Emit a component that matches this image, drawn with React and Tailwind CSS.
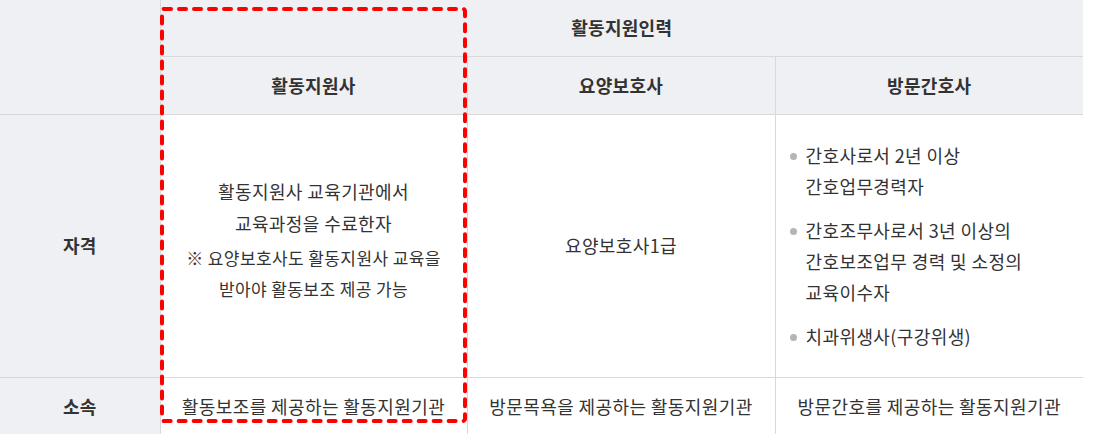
import React from "react"

const font = { fontFamily: '"Noto Sans CJK KR", "Noto Sans", sans-serif' }

function Bullet({ lines }) {
  return (
    <li className="flex gap-[9px]">
      <span className="mt-[13px] h-[7px] w-[7px] shrink-0 rounded-full bg-[#b5b5b5]" />
      <span>
        {lines.map((l, i) => (
          <span key={i} className="block">{l}</span>
        ))}
      </span>
    </li>
  )
}

export default function App() {
  const head = "bg-[#eff0f4] text-[18px] font-bold text-[#333] text-center tracking-[0.3px]"
  const line = "border-[#d9d9dc]"
  return (
    <div className="relative h-[434px] w-[1096px] overflow-hidden bg-white" style={font}>
      <table className="table-fixed border-collapse text-[#333]" style={{ width: 1083 }}>
        <colgroup>
          <col className="w-[160px]" />
          <col className="w-[307px]" />
          <col className="w-[308px]" />
          <col className="w-[308px]" />
        </colgroup>
        <thead>
          <tr className="h-[56px]">
            <th rowSpan={2} className={`${head} border-r border-b ${line}`}></th>
            <th colSpan={3} className={`${head} border-b ${line}`}>활동지원인력</th>
          </tr>
          <tr className="h-[58px]">
            <th className={`${head} border-r border-b ${line}`}>활동지원사</th>
            <th className={`${head} border-r border-b ${line}`}>요양보호사</th>
            <th className={`${head} border-b ${line}`}>방문간호사</th>
          </tr>
        </thead>
        <tbody className="text-[18px] tracking-[0.4px]">
          <tr className="h-[263px]">
            <th className={`${head} border-r border-b ${line}`}>자격</th>
            <td className={`border-r border-b ${line} pb-[12px] text-center align-middle`}>
              <p className="leading-[32px]">활동지원사 교육기관에서<br />교육과정을 수료한자</p>
              <p className="mt-[3px] text-[17px] leading-[31px]">※ 요양보호사도 활동지원사 교육을<br />받아야 활동보조 제공 가능</p>
            </td>
            <td className={`border-r border-b ${line} text-center align-middle`}>요양보호사1급</td>
            <td className={`border-b ${line} pl-[14px] align-middle`}>
              <ul className="flex flex-col gap-[13px] leading-[31px]">
                <Bullet lines={["간호사로서 2년 이상", "간호업무경력자"]} />
                <Bullet lines={["간호조무사로서 3년 이상의", "간호보조업무 경력 및 소정의", "교육이수자"]} />
                <Bullet lines={["치과위생사(구강위생)"]} />
              </ul>
            </td>
          </tr>
          <tr className="h-[58px]">
            <th className={`${head} border-r ${line}`}>소속</th>
            <td className={`border-r ${line} text-center`}>활동보조를 제공하는 활동지원기관</td>
            <td className={`border-r ${line} text-center`}>방문목욕을 제공하는 활동지원기관</td>
            <td className="text-center">방문간호를 제공하는 활동지원기관</td>
          </tr>
        </tbody>
      </table>
      <svg className="pointer-events-none absolute left-[158px] top-[5px]" width="312" height="421">
        <rect x="4" y="4" width="303" height="412" rx="2" fill="none" stroke="#ff0000" strokeWidth="4" strokeDasharray="7 8" strokeLinecap="round" />
      </svg>
    </div>
  )
}
